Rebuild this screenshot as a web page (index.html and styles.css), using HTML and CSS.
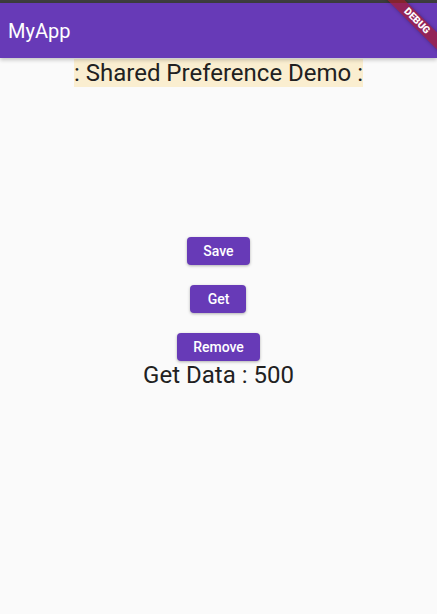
FILE: index.html
```html
<!DOCTYPE html>
<html>
<head>
<meta charset="utf-8">
<link rel="stylesheet" href="styles.css">
</head>
<body>
<div class="status"></div>
<header class="appbar"><span class="appbar-title">MyApp</span></header>
<main class="content">
  <div class="heading">: Shared Preference Demo :</div>
  <div class="actions">
    <button class="btn">Save</button>
    <button class="btn">Get</button>
    <button class="btn">Remove</button>
  </div>
  <div class="result">Get Data : 500</div>
</main>
<div class="banner-clip"><div class="banner"><span>DEBUG</span></div></div>
</body>
</html>
```
FILE: styles.css
```css
html, body {
  margin: 0;
  padding: 0;
  background: #fafafa;
  font-family: Roboto, "Noto Sans", sans-serif;
  height: 100%;
  overflow: hidden;
}
.status {
  height: 3px;
  background: #3d3d3d;
}
.appbar {
  height: 55px;
  background: #673ab7;
  display: flex;
  align-items: center;
  padding-left: 8px;
  box-shadow: 0 2px 4px rgba(0,0,0,0.22);
  position: relative;
  z-index: 1;
}
.appbar-title {
  color: #fff;
  font-size: 20px;
  font-weight: 400;
}
.content {
  display: flex;
  flex-direction: column;
  align-items: center;
}
.heading {
  margin-top: 1px;
  background: #faeed0;
  color: #212121;
  font-size: 24px;
  line-height: 28px;
}
.actions {
  margin-top: 150px;
  display: flex;
  flex-direction: column;
  align-items: center;
  gap: 20px;
}
.btn {
  box-sizing: border-box;
  height: 28px;
  min-width: 56px;
  border: none;
  border-radius: 4px;
  background: #673ab7;
  color: #fff;
  font-family: Roboto, sans-serif;
  font-size: 14px;
  font-weight: 500;
  padding: 0 16px;
  box-shadow: 0 1px 3px rgba(0,0,0,0.3);
}
.result {
  color: #212121;
  font-size: 24px;
  line-height: 28px;
}
.banner-clip {
  position: absolute;
  top: 0;
  right: 0;
  width: 80px;
  height: 80px;
  overflow: hidden;
  z-index: 2;
  pointer-events: none;
}
.banner {
  position: absolute;
  top: 14.5px;
  left: -0.5px;
  width: 120px;
  height: 12px;
  background: rgba(170,24,40,0.66);
  box-shadow: 0 0 4px rgba(0,0,0,0.3);
  transform: rotate(45deg);
  display: flex;
  align-items: center;
  justify-content: center;
}
.banner span {
  color: #fff;
  font-size: 10px;
  font-weight: 900;
  line-height: 1;
  font-family: Roboto, sans-serif;
}
```
